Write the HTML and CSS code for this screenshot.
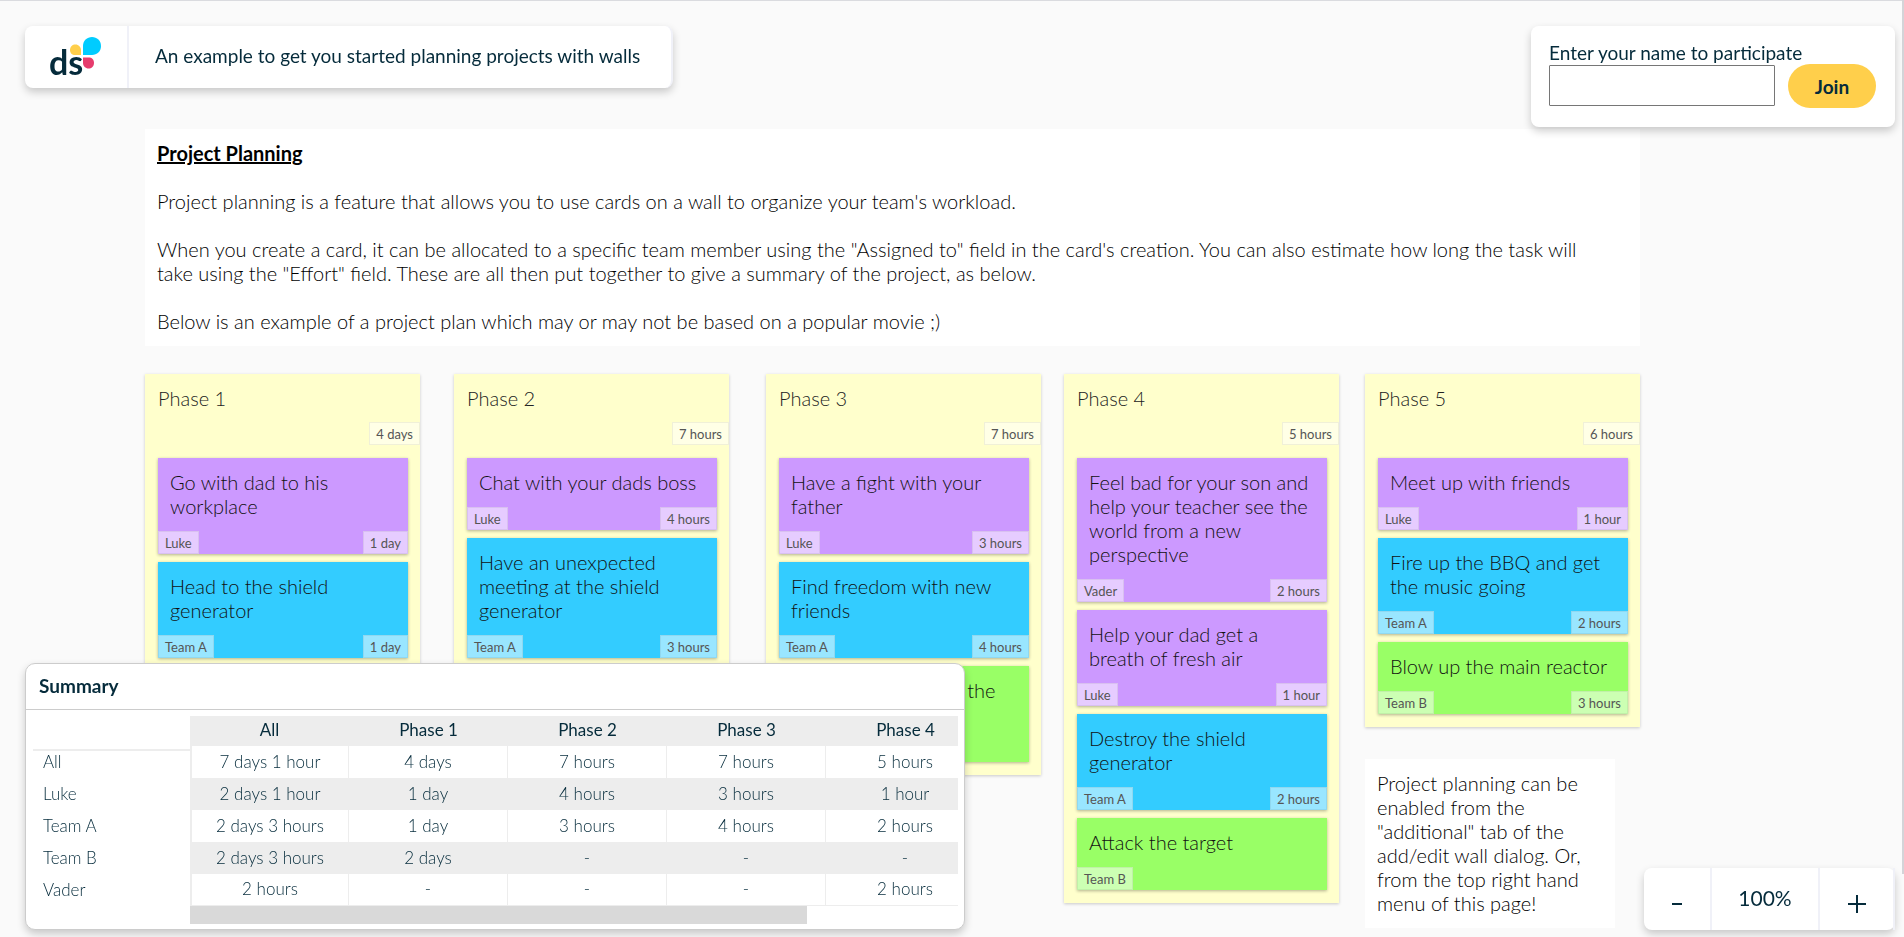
FILE: index.html
```html
<!DOCTYPE html>
<html lang="en">

<head>
  <meta charset="UTF-8">
  <meta name="viewport" content="width=device-width, initial-scale=1.0">
  <title>An example to get you started planning projects with walls</title>
  <link rel="stylesheet" href="styles.css">
</head>

<body>
  <header class="panel title-bar">
    <a class="logo" href="#" aria-label="ds home">
      <svg width="54" height="50" viewBox="0 -3 54 50">
        <text class="logo-text" x="-1" y="40">ds</text>
        <path fill="#ffcf4b" d="M31 20h-6c-3 0-5-2-5-5c0-3.500 2.500-5.500 5.500-5.500s5.500 2.500 5.500 5.500z"/>
        <path fill="#00ccff" d="M33 20v-9c0-5.500 4-9 9-9s9 3.500 9 9s-4 9-9 9z"/>
        <path fill="#e63c6d" d="M33 22.500h5.500c3.500 0 5.500 2 5.500 5.500c0 3.500-2.500 5.500-5.500 5.500s-5.500-2.500-5.500-5.500z"/>
      </svg>
    </a>
    <h1 class="wall-title">An example to get you started planning projects with walls</h1>
  </header>

  <form class="panel join">
    <div class="join-field">
      <label for="name">Enter your name to participate</label>
      <input id="name" type="text">
    </div>
    <button class="join-btn" type="button">Join</button>
  </form>

  <main class="wall">
    <section class="note intro">
      <h2>Project Planning</h2>
      <p>Project planning is a feature that allows you to use cards on a wall to organize your team's workload.</p>
      <p>When you create a card, it can be allocated to a specific team member using the "Assigned to" field in the card's creation. You can also estimate how long the task will take using the "Effort" field. These are all then put together to give a summary of the project, as below.</p>
      <p>Below is an example of a project plan which may or may not be based on a popular movie ;)</p>
    </section>

    <div class="phases">
      <section class="phase">
        <h3>Phase 1</h3>
        <span class="tag total">4 days</span>
        <article class="card purple">
          <p>Go with dad to his workplace</p>
          <div class="tags"><span class="tag">Luke</span><span class="tag">1 day</span></div>
        </article>
        <article class="card blue">
          <p>Head to the shield generator</p>
          <div class="tags"><span class="tag">Team A</span><span class="tag">1 day</span></div>
        </article>
      </section>

      <section class="phase">
        <h3>Phase 2</h3>
        <span class="tag total">7 hours</span>
        <article class="card purple">
          <p>Chat with your dads boss</p>
          <div class="tags"><span class="tag">Luke</span><span class="tag">4 hours</span></div>
        </article>
        <article class="card blue">
          <p>Have an unexpected meeting at the shield generator</p>
          <div class="tags"><span class="tag">Team A</span><span class="tag">3 hours</span></div>
        </article>
      </section>

      <section class="phase">
        <h3>Phase 3</h3>
        <span class="tag total">7 hours</span>
        <article class="card purple">
          <p>Have a fight with your father</p>
          <div class="tags"><span class="tag">Luke</span><span class="tag">3 hours</span></div>
        </article>
        <article class="card blue">
          <p>Find freedom with new friends</p>
          <div class="tags"><span class="tag">Team A</span><span class="tag">4 hours</span></div>
        </article>
        <article class="card green">
          <p>Gather your allies in the reactor</p>
          <div class="tags"><span class="tag">Team B</span></div>
        </article>
      </section>

      <section class="phase">
        <h3>Phase 4</h3>
        <span class="tag total">5 hours</span>
        <article class="card purple">
          <p>Feel bad for your son and help your teacher see the world from a new perspective</p>
          <div class="tags"><span class="tag">Vader</span><span class="tag">2 hours</span></div>
        </article>
        <article class="card purple">
          <p>Help your dad get a breath of fresh air</p>
          <div class="tags"><span class="tag">Luke</span><span class="tag">1 hour</span></div>
        </article>
        <article class="card blue">
          <p>Destroy the shield generator</p>
          <div class="tags"><span class="tag">Team A</span><span class="tag">2 hours</span></div>
        </article>
        <article class="card green">
          <p>Attack the target</p>
          <div class="tags"><span class="tag">Team B</span></div>
        </article>
      </section>

      <div class="last-column">
        <section class="phase">
          <h3>Phase 5</h3>
          <span class="tag total">6 hours</span>
          <article class="card purple">
            <p>Meet up with friends</p>
            <div class="tags"><span class="tag">Luke</span><span class="tag">1 hour</span></div>
          </article>
          <article class="card blue">
            <p>Fire up the BBQ and get the music going</p>
            <div class="tags"><span class="tag">Team A</span><span class="tag">2 hours</span></div>
          </article>
          <article class="card green">
            <p>Blow up the main reactor</p>
            <div class="tags"><span class="tag">Team B</span><span class="tag">3 hours</span></div>
          </article>
        </section>
        <section class="note hint">
          <p>Project planning can be enabled from the "additional" tab of the add/edit wall dialog. Or, from the top right hand menu of this page!</p>
        </section>
      </div>
    </div>
  </main>

  <section class="panel summary">
    <h2>Summary</h2>
    <div class="summary-body">
      <div class="table-scroll">
        <table>
          <thead>
            <tr>
              <td></td>
              <th scope="col">All</th>
              <th scope="col">Phase 1</th>
              <th scope="col">Phase 2</th>
              <th scope="col">Phase 3</th>
              <th scope="col">Phase 4</th>
            </tr>
          </thead>
          <tbody>
            <tr><th scope="row">All</th><td>7 days 1 hour</td><td>4 days</td><td>7 hours</td><td>7 hours</td><td>5 hours</td></tr>
            <tr><th scope="row">Luke</th><td>2 days 1 hour</td><td>1 day</td><td>4 hours</td><td>3 hours</td><td>1 hour</td></tr>
            <tr><th scope="row">Team A</th><td>2 days 3 hours</td><td>1 day</td><td>3 hours</td><td>4 hours</td><td>2 hours</td></tr>
            <tr><th scope="row">Team B</th><td>2 days 3 hours</td><td>2 days</td><td>-</td><td>-</td><td>-</td></tr>
            <tr><th scope="row">Vader</th><td>2 hours</td><td>-</td><td>-</td><td>-</td><td>2 hours</td></tr>
          </tbody>
        </table>
      </div>
      <div class="scroll-track"><div class="scroll-thumb"></div></div>
    </div>
  </section>

  <div class="panel zoom">
    <button type="button" aria-label="Zoom out">
      <svg width="22" height="22" viewBox="0 0 22 22"><path d="M6 11h10"/></svg>
    </button>
    <output>100%</output>
    <button type="button" aria-label="Zoom in">
      <svg width="22" height="22" viewBox="0 0 22 22"><path d="M2 11h18M11 2v18"/></svg>
    </button>
  </div>

  <div class="page-scroll"></div>
</body>

</html>
```
FILE: styles.css
```css
/* ---- General ---- */

:root {
  --navy: #052b3b;
  --line: #f0f1f8;
  --grey: #ededed;
}

* {
  box-sizing: border-box;
}

body {
  height: 100vh;
  margin: 0;
  overflow: hidden;
  border-top: 1px solid #dadbdf;
  background: #fafafa;
  font-family: Lato, sans-serif;
  color: var(--navy);
}

h1, h2, h3, p {
  margin: 0;
  font-weight: 400;
}

.panel {
  position: fixed;
  z-index: 2;
  background: #fff;
  border-radius: 8px;
  box-shadow: 0 4px 8px rgba(0, 0, 0, .2);
}

.page-scroll {
  position: fixed;
  top: 0;
  right: 0;
  width: 2px;
  height: 874px;
  background: #d4d4d8;
}

/* ---- Title bar ---- */

.title-bar {
  top: 26px;
  left: 25px;
  display: flex;
  height: 62px;
  border-right: 2px solid var(--line);
}

.logo {
  display: flex;
  align-items: center;
  padding: 0 23px 0 25px;
  border-right: 2px solid var(--line);
}

.logo svg {
  overflow: visible;
}

.logo-text {
  font-size: 34px;
  font-weight: 700;
  fill: var(--navy);
}

.wall-title {
  padding: 0 31px 0 26px;
  font-size: 19px;
  line-height: 60px;
}

/* ---- Join form ---- */

.join {
  top: 26px;
  right: 9px;
  display: flex;
  align-items: flex-end;
  gap: 13px;
  padding: 15px 19px 19px 18px;
}

.join-field {
  display: flex;
  flex-direction: column;
  width: 226px;
  padding-bottom: 2px;
}

.join label {
  font-size: 19px;
  line-height: 24px;
  white-space: nowrap;
}

.join input {
  height: 41px;
  padding: 0 8px;
  border: 1px solid #767676;
  border-radius: 1px;
  font: inherit;
}

.join-btn {
  width: 88px;
  height: 44px;
  border: 0;
  border-radius: 22px;
  background: #ffcf4b;
  color: var(--navy);
  font: 700 19px Lato, sans-serif;
}

/* ---- Wall ---- */

.wall {
  max-width: 1495px;
  margin: 128px 0 0 145px;
  color: #000;
  font-size: 20px;
  line-height: 24px;
  font-weight: 300;
}

.wall p, .wall h3 {
  font-weight: 300;
}

.note {
  padding: 12px 12px 13px;
  background: #fff;
}

.intro {
  padding-right: 36px;
}

.intro h2 {
  font-size: 20px;
  font-weight: 700;
  line-height: 24px;
  text-decoration: underline;
}

.intro p {
  margin-top: 24px;
}

.phases {
  display: grid;
  grid-template-columns: 309fr 312fr 298fr 301fr 275fr;
  align-items: start;
  margin-top: 28px;
}

.phase {
  display: flex;
  flex-direction: column;
  gap: 8px;
  max-width: 275px;
  padding: 12px 12px 13px 13px;
  background: #ffffcc;
  box-shadow: 0 1px 3px rgba(0, 0, 0, .2);
}

.phase h3 {
  font-size: 20px;
  line-height: 24px;
  color: #222;
}

.tag {
  height: 23px;
  padding: 0 6px;
  border: 1px solid rgba(0, 0, 0, .06);
  background: rgba(255, 255, 255, .5);
  color: #555;
  font-size: 13px;
  font-weight: 400;
  line-height: 22px;
}

.total {
  align-self: flex-end;
  margin: 4px -12px 5px 0;
}

.card {
  color: #111;
  box-shadow: 0 1px 3px rgba(0, 0, 0, .3);
}

.card p {
  padding: 12px 12px 13px;
}

.tags {
  display: flex;
  justify-content: space-between;
}

.purple {
  background: #cc99ff;
}

.blue {
  background: #33ccff;
}

.green {
  background: #99ff66;
}

.hint {
  max-width: 250px;
  margin-top: 32px;
}

/* ---- Summary ---- */

.summary {
  bottom: 7px;
  left: 25px;
  width: 940px;
  max-width: 96vw;
  border: 1px solid #ccc;
  border-radius: 10px;
}

.summary h2 {
  padding: 0 13px 2px;
  border-bottom: 1px solid #ccc;
  font-size: 19px;
  font-weight: 700;
  line-height: 43px;
}

.summary-body {
  padding: 6px 6px 5px 7px;
}

.table-scroll {
  overflow: hidden;
}

table {
  width: 952px;
  border-collapse: separate;
  border-spacing: 0;
  table-layout: fixed;
  text-align: center;
}

td, tbody th {
  height: 32px;
  padding: 0 0 2px;
  font-size: 17px;
  font-weight: 300;
}

thead td {
  width: 157px;
  height: 30px;
}

thead th {
  height: 30px;
  padding: 0 0 4px;
  background: var(--grey);
  font-size: 17px;
  font-weight: 400;
}

tbody th {
  padding-left: 10px;
  text-align: left;
}

tbody tr:first-child th {
  background: linear-gradient(var(--grey), var(--grey)) 0 3px / 100% 2px no-repeat;
}

tbody td {
  border-right: 1px solid var(--grey);
}

tbody th + td {
  border-left: 2px solid var(--grey);
}

tbody tr:nth-child(even) td {
  background: var(--grey);
}

tbody tr:last-child td {
  border-bottom: 1px solid var(--grey);
}

.scroll-track {
  margin-left: 157px;
}

.scroll-thumb {
  width: 81%;
  max-width: 617px;
  height: 18px;
  background: #d9d9d9;
}

/* ---- Zoom control ---- */

.zoom {
  right: 9px;
  bottom: 7px;
  display: flex;
  height: 62px;
}

.zoom button {
  width: 75px;
  padding: 12px 0 0;
  border: 0;
  border-right: 2px solid var(--line);
  background: none;
}

.zoom button:first-child {
  width: 68px;
}

.zoom path {
  fill: none;
  stroke: var(--navy);
  stroke-width: 2;
}

.zoom output {
  width: 108px;
  border-right: 2px solid var(--line);
  font-size: 21px;
  line-height: 60px;
  text-align: center;
}
```
